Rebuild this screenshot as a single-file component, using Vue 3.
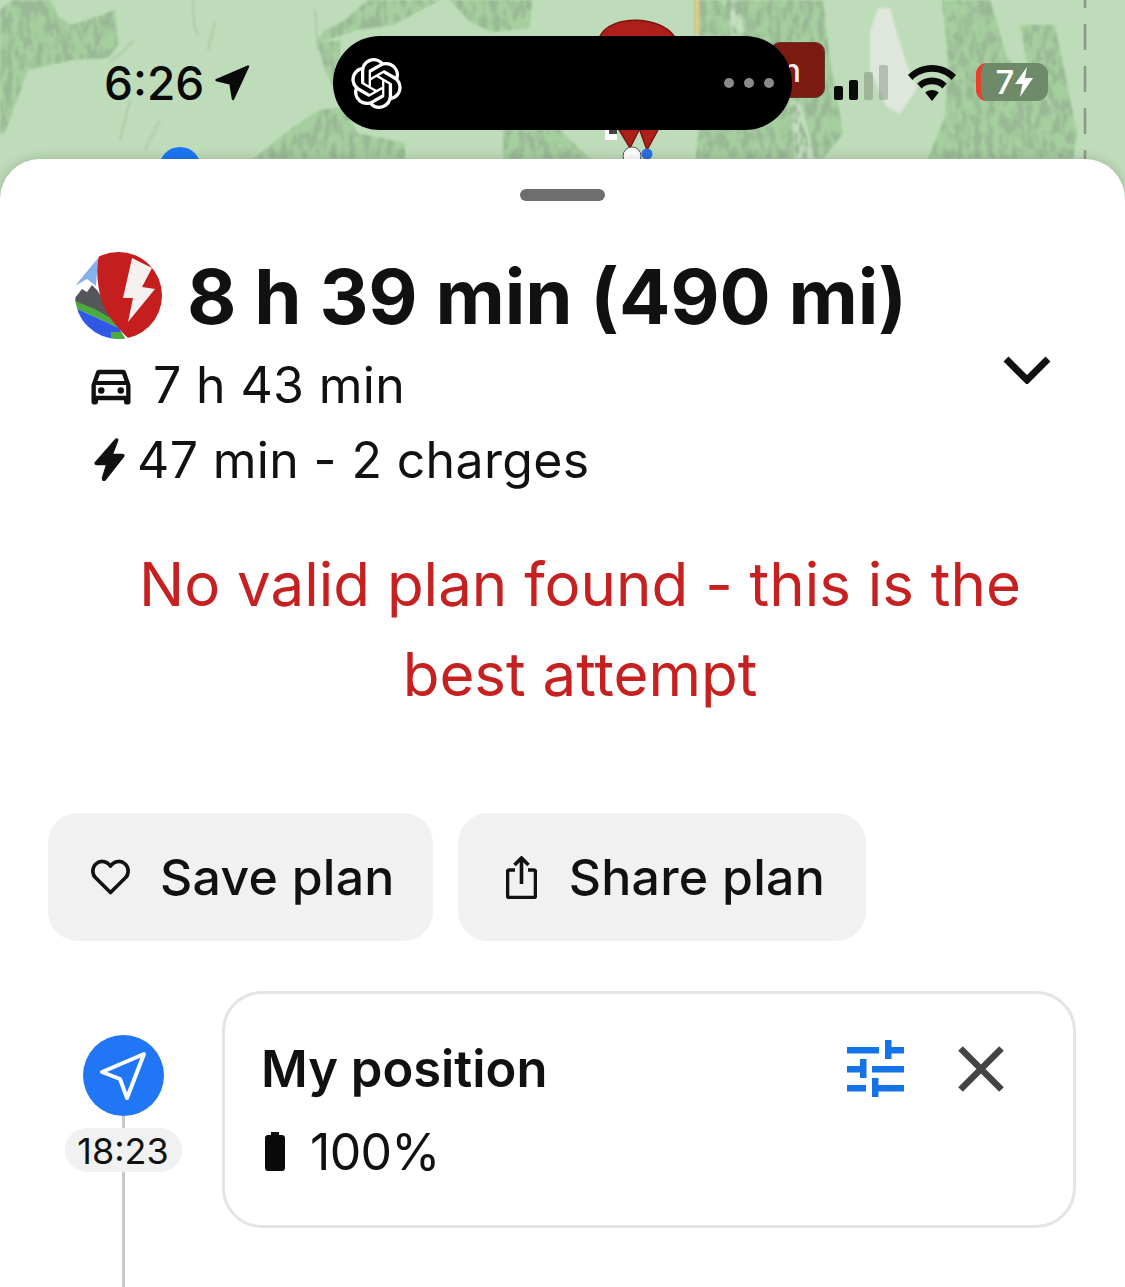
<script setup>
const terrain = [
  "0,10 12,0 50,0 60,18 72,25 115,10 118,45 108,58 72,60 28,70 5,132 0,135",
  "318,43 357,30 393,25 440,0 368,0 345,20 325,30 317,40 325,70 332,85 340,77 340,40",
  "253,159 293,127 320,110 345,107 357,133 405,143 405,159",
  "450,0 532,0 530,28 492,32 470,22",
  "503,130 560,130 590,159 503,159",
  "700,0 823,0 830,60 843,133 823,159 696,159 700,110",
  "942,0 990,0 1007,57 1077,133 1073,159 928,159 945,117 948,60",
  "1020,25 1055,25 1077,133 1030,80",
]
const lightStrips = [
  "790,100 800,100 815,159 795,159",
  "723,0 740,0 746,60 738,60",
]
const scratches = [
  "M193 0 L194 25 L198 35",
  "M215 22 L208 50",
  "M133 40 L125 50 L110 62",
  "M315 10 L318 50",
  "M130 100 L120 140",
  "M160 120 L145 150",
]
</script>

<template>
  <div class="screen">
    <div class="map">
      <svg class="map__art" width="1125" height="200" viewBox="0 0 1125 200">
        <defs>
          <clipPath id="ridges">
            <polygon v-for="p in terrain" :key="p" :points="p" />
          </clipPath>
          <filter id="rock" x="0" y="0" width="100%" height="100%">
            <feTurbulence type="fractalNoise" baseFrequency="0.16 0.06" numOctaves="4" seed="11" />
            <feColorMatrix
              type="matrix"
              values="0 0 0 0 0.32  0 0 0 0 0.48  0 0 0 0 0.30  4 4 0 0 -3.6"
            />
          </filter>
          <filter id="soft"><feGaussianBlur stdDeviation="0.8" /></filter>
        </defs>
        <rect width="1125" height="200" fill="#bedcb9" />
        <g filter="url(#soft)">
          <polygon v-for="p in terrain" :key="p" :points="p" fill="#a6cf9f" />
          <polygon v-for="p in lightStrips" :key="p" :points="p" fill="#c4e0bf" />
          <polygon points="870,32 878,8 890,8 896,30 906,62 917,88 900,114 886,106 870,70" fill="#dfe7dc" />
          <rect width="1125" height="200" filter="url(#rock)" clip-path="url(#ridges)" />
          <path d="M697 0 V35" stroke="#b9a15e" stroke-width="4.5" />
          <path d="M697 0 V35" stroke="#f2d98c" stroke-width="2.5" />
          <path v-for="d in scratches" :key="d" :d="d" fill="none" stroke="#8fae8a" stroke-width="1.5" opacity="0.5" />
        </g>
        <path d="M1085 0 V165" stroke="#8b9a88" stroke-width="2.5" stroke-dasharray="26 16" stroke-dashoffset="18" />
        <circle cx="180" cy="168" r="21" fill="#1a76f2" />
        <path d="M600 36 C612 14 660 16 674 36 L674 60 L600 60 Z" fill="#ad1f1a" stroke="#7a1512" stroke-width="1.5" />
        <path d="M618 128 L640 128 L630 148 Z" fill="#ad1f1a" stroke="#7a1512" stroke-width="1.5" />
        <path d="M639 128 L659 128 L647 150 Z" fill="#ad1f1a" stroke="#7a1512" stroke-width="1.5" />
        <rect x="605" y="128" width="12" height="12" fill="#fff" />
        <rect x="609" y="128" width="8" height="6" fill="#444" />
        <circle cx="632" cy="156" r="9" fill="#fff" stroke="#555" stroke-width="1" />
        <circle cx="647" cy="154" r="5.5" fill="#2a6fe0" />
      </svg>

      <div class="badge"><span class="badge__text">n</span></div>

      <div class="clock">
        <span>6:26</span>
        <svg width="35" height="36" viewBox="0 0 35 36">
          <path d="M33 1.5 L1.5 15 L15.5 18.5 L18 34 Z" fill="#0a0a0a" stroke="#0a0a0a" stroke-width="2.4" stroke-linejoin="round" />
        </svg>
      </div>

      <div class="island">
        <svg class="island__logo" width="51" height="51" viewBox="0 0 24 24">
          <path
            fill="#fff"
            d="M22.2819 9.8211a5.9847 5.9847 0 0 0-.5157-4.9108 6.0462 6.0462 0 0 0-6.5098-2.9A6.0651 6.0651 0 0 0 4.9807 4.1818a5.9847 5.9847 0 0 0-3.9977 2.9 6.0462 6.0462 0 0 0 .7427 7.0966 5.98 5.98 0 0 0 .511 4.9107 6.051 6.051 0 0 0 6.5146 2.9001A5.9847 5.9847 0 0 0 13.2599 24a6.0557 6.0557 0 0 0 5.7718-4.2058 5.9894 5.9894 0 0 0 3.9977-2.9001 6.0557 6.0557 0 0 0-.7475-7.0729zm-9.022 12.6081a4.4755 4.4755 0 0 1-2.8764-1.0408l.1419-.0804 4.7783-2.7582a.7948.7948 0 0 0 .3927-.6813v-6.7369l2.02 1.1686a.071.071 0 0 1 .038.052v5.5826a4.504 4.504 0 0 1-4.4945 4.4944zm-9.6607-4.1254a4.4708 4.4708 0 0 1-.5346-3.0137l.142.0852 4.783 2.7582a.7712.7712 0 0 0 .7806 0l5.8428-3.3685v2.3324a.0804.0804 0 0 1-.0332.0615L9.74 19.9502a4.4992 4.4992 0 0 1-6.1408-1.6464zM2.3408 7.8956a4.485 4.485 0 0 1 2.3655-1.9728V11.6a.7664.7664 0 0 0 .3879.6765l5.8144 3.3543-2.0201 1.1685a.0757.0757 0 0 1-.071 0l-4.8303-2.7865A4.504 4.504 0 0 1 2.3408 7.872zm16.5963 3.8558L13.1038 8.364 15.1192 7.2a.0757.0757 0 0 1 .071 0l4.8303 2.7913a4.4944 4.4944 0 0 1-.6765 8.1042v-5.6772a.79.79 0 0 0-.407-.667zm2.0107-3.0231l-.142-.0852-4.7735-2.7818a.7759.7759 0 0 0-.7854 0L9.409 9.2297V6.8974a.0662.0662 0 0 1 .0284-.0615l4.8303-2.7866a4.4992 4.4992 0 0 1 6.6802 4.66zM8.3065 12.863l-2.02-1.1638a.0804.0804 0 0 1-.038-.0567V6.0742a4.4992 4.4992 0 0 1 7.3757-3.4537l-.142.0805L8.704 5.459a.7948.7948 0 0 0-.3927.6813zm1.0976-2.3654l2.602-1.4998 2.6069 1.4998v2.9994l-2.5974 1.4997-2.6067-1.4997Z"
          />
        </svg>
        <div class="island__dots"><i></i><i></i><i></i></div>
      </div>

      <div class="status">
        <div class="signal"><i></i><i></i><i class="off"></i><i class="off"></i></div>
        <svg width="48" height="36" viewBox="0 0 48 36">
          <path d="M24 0 C33 0 41.5 3.6 48 10 L43.6 15 C38.4 9.8 31.4 6.8 24 6.8 C16.6 6.8 9.6 9.8 4.4 15 L0 10 C6.5 3.6 15 0 24 0 Z" fill="#0a0a0a" />
          <path d="M24 12.6 C29.6 12.6 34.8 14.8 38.8 18.6 L34.4 23.4 C31.6 20.8 28 19.3 24 19.3 C20 19.3 16.4 20.8 13.6 23.4 L9.2 18.6 C13.2 14.8 18.4 12.6 24 12.6 Z" fill="#0a0a0a" />
          <path d="M24 25 C26.6 25 29 26 30.8 27.6 L24 36 L17.2 27.6 C19 26 21.4 25 24 25 Z" fill="#0a0a0a" />
        </svg>
        <div class="battery">
          <span>7</span>
          <svg width="18" height="30" viewBox="0 0 18 30">
            <path d="M12 0 L0 17 H7.5 L5 30 L18 11 H10 Z" fill="#fff" />
          </svg>
        </div>
      </div>
    </div>

    <div class="sheet">
      <div class="sheet__handle"></div>

      <div class="summary">
        <div class="summary__info">
          <div class="summary__title">
            <svg width="87" height="87" viewBox="0 0 87 87">
              <defs>
                <clipPath id="disc"><circle cx="43.5" cy="43.5" r="43.5" /></clipPath>
              </defs>
              <g clip-path="url(#disc)">
                <rect width="87" height="87" fill="#fff" />
                <path d="M23 6 L0 34 L12 27 L21 34 Z" fill="#86b0ee" />
                <path d="M0 46 L7 37 L12 40 L17 33 L22 38 L30 50 L42 70 L20 58 L0 50 Z" fill="#55565a" />
                <path d="M0 49 L20 57 L42 70 L44 76 L20 65 L0 56 Z" fill="#4cab3f" />
                <path d="M0 56 L20 65 L44 76 L50 87 H0 Z" fill="#2f58e4" />
                <path d="M36 80 L46 80 L51 87 H36 Z" fill="#4cab3f" />
                <path d="M25 0 C21 12 21 30 27 50 C31 62 42 76 54 87 H87 V0 Z" fill="#c41e1e" />
                <path d="M57 6 L77 16 L67 35 L80 37 L53 70 L58 46 L48 46 Z" fill="#f4f1f0" />
              </g>
            </svg>
            <span>8 h 39 min (490 mi)</span>
          </div>
          <div class="summary__line summary__line--drive">
            <svg width="52" height="52" viewBox="0 0 24 24">
              <path
                fill="#111"
                d="M18.92 6.01C18.72 5.42 18.16 5 17.5 5h-11c-.66 0-1.21.42-1.42 1.01L3 12v8c0 .55.45 1 1 1h1c.55 0 1-.45 1-1v-1h12v1c0 .55.45 1 1 1h1c.55 0 1-.45 1-1v-8l-2.08-5.99zM6.85 7h10.29l1.08 3.11H5.77L6.85 7zM19 17H5v-5h14v5z"
              />
              <circle cx="7.5" cy="14.5" r="1.5" fill="#111" />
              <circle cx="16.5" cy="14.5" r="1.5" fill="#111" />
            </svg>
            <span>7 h 43 min</span>
          </div>
          <div class="summary__line summary__line--charge">
            <svg width="31" height="43" viewBox="0 0 30 42">
              <path d="M21 1 L1 24 Q0 26 3 26 H12 L8 39 Q8 43 11 41 L29 18 Q30 16 27 16 H18 L23 3 Q24 0 21 1 Z" fill="#111" stroke="#111" stroke-width="1" />
            </svg>
            <span>47 min - 2 charges</span>
          </div>
        </div>
        <svg class="summary__toggle" width="48" height="28" viewBox="0 0 48 28">
          <path d="M3 3 L24 24 L45 3" fill="none" stroke="#111" stroke-width="7" />
        </svg>
      </div>

      <p class="warning">No valid plan found - this is the<br />best attempt</p>

      <div class="actions">
        <button class="action action--save">
          <svg width="39" height="36" viewBox="0 0 39 36">
            <path
              d="M19.5 33.5 L4.6 18.8 C0.8 15 1 8.8 4.8 5 C8.6 1.4 14.8 1.6 18 5.4 L19.5 7.2 L21 5.4 C24.2 1.6 30.4 1.4 34.2 5 C38 8.8 38.2 15 34.4 18.8 Z"
              fill="none"
              stroke="#111"
              stroke-width="3.6"
              stroke-linejoin="round"
            />
          </svg>
          <span>Save plan</span>
        </button>
        <button class="action action--share">
          <svg width="31" height="43" viewBox="0 0 31 43">
            <path d="M9 14 H3.5 C2.4 14 1.5 14.9 1.5 16 V39.5 C1.5 40.6 2.4 41.5 3.5 41.5 H27.5 C28.6 41.5 29.5 40.6 29.5 39.5 V16 C29.5 14.9 28.6 14 27.5 14 H22" fill="none" stroke="#111" stroke-width="3.6" />
            <path d="M15.5 2 V28" fill="none" stroke="#111" stroke-width="3.6" />
            <path d="M8.5 9 L15.5 2 L22.5 9" fill="none" stroke="#111" stroke-width="3.6" />
          </svg>
          <span>Share plan</span>
        </button>
      </div>

      <div class="stop">
        <div class="stop__rail">
          <div class="stop__marker">
            <svg width="52" height="52" viewBox="0 0 52 52">
              <path d="M47 4 L5 22 L23 29 L30 48 Z" fill="none" stroke="#fff" stroke-width="4" stroke-linejoin="round" />
            </svg>
          </div>
          <div class="stop__stem stop__stem--short"></div>
          <div class="stop__time">18:23</div>
          <div class="stop__stem"></div>
        </div>

        <div class="card">
          <div class="card__head">
            <span class="card__title">My position</span>
            <div class="card__tools">
              <svg width="57" height="57" viewBox="0 0 57 57" fill="#1473e6">
                <rect x="0" y="7" width="32" height="6.5" />
                <rect x="38" y="0" width="6.5" height="19" />
                <rect x="44" y="7" width="13" height="6.5" />
                <rect x="0" y="26" width="13" height="6.5" />
                <rect x="13" y="19" width="6.5" height="19" />
                <rect x="25" y="26" width="32" height="6.5" />
                <rect x="0" y="45" width="19" height="6.5" />
                <rect x="25" y="38" width="6.5" height="19" />
                <rect x="31" y="45" width="26" height="6.5" />
              </svg>
              <svg width="46" height="46" viewBox="0 0 46 46">
                <path d="M2.5 2.5 L43.5 43.5 M43.5 2.5 L2.5 43.5" stroke="#444" stroke-width="6.5" />
              </svg>
            </div>
          </div>
          <div class="card__charge">
            <svg width="20" height="39" viewBox="0 0 20 39">
              <path d="M6 0 H14 V3 H17 C18.7 3 20 4.3 20 6 V36 C20 37.7 18.7 39 17 39 H3 C1.3 39 0 37.7 0 36 V6 C0 4.3 1.3 3 3 3 H6 Z" fill="#0a0a0a" />
            </svg>
            <span>100%</span>
          </div>
        </div>
      </div>
    </div>
  </div>
</template>

<style>
html,
body {
  margin: 0;
  background: #fff;
  overflow: hidden;
}
</style>

<style scoped>
.screen {
  display: flex;
  flex-direction: column;
  width: 1125px;
  height: 1287px;
  overflow: hidden;
  font-family: Inter, "Liberation Sans", sans-serif;
  color: #111;
}

.map {
  position: relative;
  flex: none;
  height: 200px;
}

.map__art {
  position: absolute;
  top: 0;
  left: 0;
  display: block;
}

.badge {
  position: absolute;
  left: 770px;
  top: 42px;
  width: 55px;
  height: 56px;
  box-sizing: border-box;
  padding-right: 23px;
  background: #7a1a10;
  border: 1px solid #5f3a2a;
  border-radius: 10px;
  display: flex;
  justify-content: flex-end;
  align-items: center;
}

.badge__text {
  color: #eee;
  font-size: 32px;
  font-weight: 500;
  line-height: 1;
  margin-top: 2px;
}

.clock {
  position: absolute;
  left: 104px;
  top: 53px;
  display: flex;
  align-items: center;
  gap: 11px;
  font-size: 46px;
  line-height: 60px;
  font-weight: 500;
  color: #0a0a0a;
}

.island {
  position: absolute;
  left: 333px;
  top: 36px;
  width: 459px;
  height: 94px;
  background: #000;
  border-radius: 47px;
  display: flex;
  align-items: center;
  justify-content: space-between;
  padding: 0 18px 0 18px;
  box-sizing: border-box;
}

.island__logo {
  display: block;
}

.island__dots {
  display: flex;
  gap: 10px;
}

.island__dots i {
  display: block;
  width: 10px;
  height: 10px;
  border-radius: 50%;
  background: #8a8a8a;
}

.status {
  position: absolute;
  left: 834px;
  top: 64px;
  display: flex;
  align-items: flex-end;
  height: 37px;
}

.signal {
  display: flex;
  align-items: flex-end;
  gap: 6px;
  margin: 0 20px 1px 0;
}

.signal i {
  display: block;
  width: 9px;
  border-radius: 2px;
  background: #0a0a0a;
}

.signal i:nth-child(1) {
  height: 14px;
}

.signal i:nth-child(2) {
  height: 20px;
}

.signal i:nth-child(3) {
  height: 28px;
}

.signal i:nth-child(4) {
  height: 35px;
}

.signal i.off {
  background: rgba(90, 100, 90, 0.32);
}

.battery {
  display: flex;
  align-items: center;
  justify-content: center;
  gap: 1px;
  width: 72px;
  height: 38px;
  margin: 0 0 0 20px;
  box-sizing: border-box;
  background: #6f8a68;
  border-left: 5px solid #e8402a;
  border-radius: 11px;
  color: #fff;
  font-size: 33px;
  font-weight: 500;
}

.sheet {
  position: relative;
  flex: 1;
  display: flex;
  flex-direction: column;
  min-height: 0;
  margin-top: -41px;
  padding-top: 30px;
  background: #fff;
  border-radius: 40px 40px 0 0;
  box-shadow: 0 0 12px rgba(0, 0, 0, 0.18);
}

.sheet__handle {
  flex: none;
  width: 85px;
  height: 12px;
  margin: 0 auto;
  border-radius: 6px;
  background: #6e6e6e;
}

.summary {
  display: flex;
  align-items: center;
  justify-content: space-between;
  padding: 51px 74px 0 75px;
}

.summary__title {
  display: flex;
  align-items: center;
  gap: 25px;
  height: 87px;
  font-size: 76px;
  font-weight: 700;
  letter-spacing: -0.1px;
  white-space: nowrap;
}

.summary__line {
  display: flex;
  align-items: center;
  height: 75px;
  font-size: 50px;
  letter-spacing: 0.35px;
  white-space: nowrap;
}

.summary__line--drive {
  gap: 16px;
  margin-top: 8px;
  padding-left: 10px;
}

.summary__line--charge {
  gap: 12px;
  margin-top: 0;
  padding-left: 19px;
}

.summary__toggle {
  flex: none;
  margin-top: -10px;
}

.warning {
  margin: 42px 0 0;
  padding: 0 59px 0 94px;
  font-size: 60px;
  line-height: 90px;
  color: #c62020;
  text-align: center;
  white-space: nowrap;
}

.actions {
  display: flex;
  gap: 25px;
  padding: 94px 0 0 48px;
}

.action {
  display: flex;
  align-items: center;
  height: 128px;
  border: none;
  border-radius: 30px;
  background: #f1f1f1;
  color: #111;
  font: inherit;
  font-size: 50px;
  font-weight: 500;
  letter-spacing: 0.25px;
}

.action--save {
  gap: 30px;
  padding: 0 38px 0 43px;
}

.action--share {
  gap: 32px;
  padding: 0 41px 0 48px;
}

.stop {
  flex: 1;
  display: flex;
  min-height: 0;
  margin-top: 50px;
  padding-left: 48px;
}

.stop__rail {
  flex: none;
  width: 150px;
  display: flex;
  flex-direction: column;
  align-items: center;
  padding-top: 44px;
}

.stop__marker {
  flex: none;
  display: flex;
  align-items: center;
  justify-content: center;
  width: 81px;
  height: 81px;
  border-radius: 50%;
  background: #2176f6;
}

.stop__stem {
  flex: 1;
  width: 3px;
  background: #c8c8c8;
}

.stop__stem--short {
  flex: none;
  height: 12px;
}

.stop__time {
  flex: none;
  width: 117px;
  height: 44px;
  border-radius: 22px;
  background: #f1f1f1;
  font-size: 36px;
  line-height: 46px;
  text-align: center;
}

.card {
  flex: none;
  align-self: flex-start;
  width: 854px;
  height: 237px;
  margin-left: 24px;
  box-sizing: border-box;
  padding: 37px 69px 0 36px;
  border: 3px solid #e4e4e4;
  border-radius: 40px;
}

.card__head {
  display: flex;
  align-items: center;
  justify-content: space-between;
  height: 75px;
}

.card__title {
  font-size: 50.7px;
  font-weight: 600;
}

.card__tools {
  display: flex;
  align-items: center;
  gap: 54px;
}

.card__charge {
  display: flex;
  align-items: center;
  gap: 25px;
  height: 75px;
  margin-top: 8px;
  padding-left: 4px;
  font-size: 50px;
  letter-spacing: -0.7px;
}
</style>
